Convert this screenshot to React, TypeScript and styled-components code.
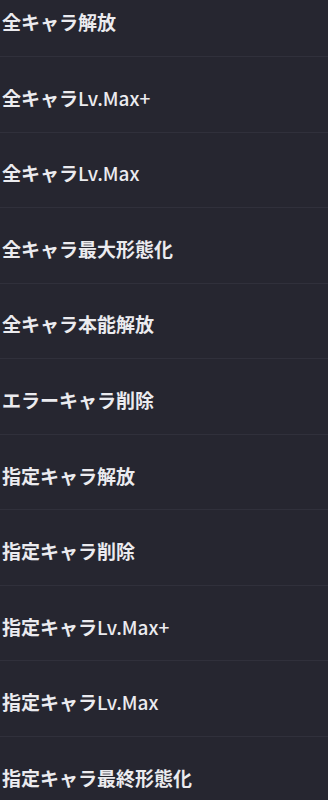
import React from "react";
import styled, { createGlobalStyle } from "styled-components";

const GlobalStyle = createGlobalStyle`
  html, body {
    margin: 0;
    padding: 0;
    background: #262630;
    overflow: hidden;
  }
`;

const Page = styled.div`
  width: 328px;
  height: 800px;
  overflow: hidden;
  background: #262630;
  font-family: "Noto Sans CJK JP", "Noto Sans", sans-serif;
`;

const List = styled.ul`
  list-style: none;
  margin: -18.5px 0 0;
  padding: 0;
`;

const Row = styled.li`
  box-sizing: border-box;
  height: 75.56px;
  display: flex;
  align-items: center;
  padding: 6px 0 0 2px;
  border-bottom: 1px solid #30303b;
`;

const Label = styled.span`
  font-size: 19px;
  font-weight: 700;
  color: #ebebef;
  line-height: 1;
`;

const Latin = styled.span`
  font-weight: 500;
`;

const items = [
  "全キャラ解放",
  "全キャラLv.Max+",
  "全キャラLv.Max",
  "全キャラ最大形態化",
  "全キャラ本能解放",
  "エラーキャラ削除",
  "指定キャラ解放",
  "指定キャラ削除",
  "指定キャラLv.Max+",
  "指定キャラLv.Max",
  "指定キャラ最終形態化",
];

const renderLabel = (t: string) => {
  const i = t.indexOf("Lv.");
  if (i < 0) return t;
  return (
    <>
      {t.slice(0, i)}
      <Latin>{t.slice(i)}</Latin>
    </>
  );
};

export default function App() {
  return (
    <Page>
      <GlobalStyle />
      <List>
        {items.map((t) => (
          <Row key={t}>
            <Label>{renderLabel(t)}</Label>
          </Row>
        ))}
      </List>
    </Page>
  );
}
